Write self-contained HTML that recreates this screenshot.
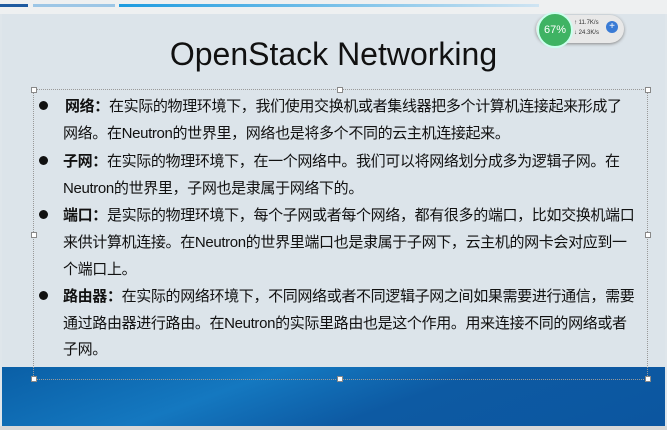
<!DOCTYPE html>
<html><head><meta charset="utf-8"><style>
html,body{margin:0;padding:0;width:667px;height:430px;overflow:hidden;background:#dfe6eb;}
body{position:relative;font-family:"Liberation Sans","Noto Sans CJK SC",sans-serif;}
.top{position:absolute;left:0;top:0;width:667px;height:14px;background:#eef0f1;}
.b1{position:absolute;top:4px;height:3px;}
.main{position:absolute;left:2px;top:14px;width:663px;height:353px;background:#dce4ea;}
.blue{position:absolute;left:2px;top:367px;width:663px;height:59px;background:linear-gradient(160deg,#0a5fa6 0%,#1478c0 35%,#0d5aa3 60%,#0c56a0 100%);}
.bot{position:absolute;left:0;top:426px;width:667px;height:4px;background:#d8d8d8;}
h1{position:absolute;left:0;width:667px;top:36px;margin:0;text-align:center;font-weight:normal;font-size:32px;color:#111;}
.l{position:absolute;left:63px;font-size:15px;color:#111;white-space:nowrap;letter-spacing:-0.35px;}
.d{position:absolute;left:39px;width:9px;height:9px;border-radius:50%;background:#111;}
b{font-weight:bold;}
.sel{position:absolute;left:33px;top:89px;width:613px;height:289px;border:1px dotted #999;}
.h{position:absolute;width:4px;height:4px;background:#fff;border:1px solid #888;}
</style></head><body>
<div class="top"></div>
<div class="b1" style="left:0;width:28px;background:#1d5aa0"></div>
<div class="b1" style="left:33px;width:82px;background:#9cc6e6"></div>
<div class="b1" style="left:119px;width:420px;background:linear-gradient(90deg,#1c9be0,#cfe4f2)"></div>
<div class="main"></div>
<div class="blue"></div>
<div class="bot"></div>
<div class="sel"></div>
<div class="h" style="left:31px;top:87px"></div><div class="h" style="left:337px;top:87px"></div><div class="h" style="left:645px;top:87px"></div>
<div class="h" style="left:31px;top:376px"></div><div class="h" style="left:337px;top:376px"></div><div class="h" style="left:645px;top:376px"></div>
<div class="h" style="left:31px;top:232px"></div><div class="h" style="left:645px;top:232px"></div>
<h1>OpenStack Networking</h1>
<div style="position:absolute;left:536px;top:15px;width:88px;height:28px;border-radius:14px;background:#e8e8e8;box-shadow:0 1px 3px #888"></div>
<div style="position:absolute;left:537px;top:12px;width:32px;height:32px;border-radius:50%;background:#3fb363;border:2px solid #cfe;color:#fff;font-size:11px;line-height:32px;text-align:center">67%</div>
<div style="position:absolute;left:574px;top:18px;font-size:6px;line-height:10px;color:#333">↑ 11.7K/s<br>↓ 24.3K/s</div>
<div style="position:absolute;left:606px;top:21px;width:12px;height:12px;border-radius:50%;background:#3a7bd5;color:#fff;font-size:10px;line-height:12px;text-align:center">+</div>
<div class="d" style="top:101px"></div>
<div class="l" style="top:95px;left:65px"><b>网络：</b>在实际的物理环境下，我们使用交换机或者集线器把多个计算机连接起来形成了</div>
<div class="l" style="top:122px">网络。在Neutron的世界里，网络也是将多个不同的云主机连接起来。</div>
<div class="d" style="top:156px"></div>
<div class="l" style="top:150px"><b>子网：</b>在实际的物理环境下，在一个网络中。我们可以将网络划分成多为逻辑子网。在</div>
<div class="l" style="top:177px">Neutron的世界里，子网也是隶属于网络下的。</div>
<div class="d" style="top:210px"></div>
<div class="l" style="top:204px"><b>端口：</b>是实际的物理环境下，每个子网或者每个网络，都有很多的端口，比如交换机端口</div>
<div class="l" style="top:231px">来供计算机连接。在Neutron的世界里端口也是隶属于子网下，云主机的网卡会对应到一</div>
<div class="l" style="top:258px">个端口上。</div>
<div class="d" style="top:291px"></div>
<div class="l" style="top:285px"><b>路由器：</b>在实际的网络环境下，不同网络或者不同逻辑子网之间如果需要进行通信，需要</div>
<div class="l" style="top:312px">通过路由器进行路由。在Neutron的实际里路由也是这个作用。用来连接不同的网络或者</div>
<div class="l" style="top:338px">子网。</div>
</body></html>
